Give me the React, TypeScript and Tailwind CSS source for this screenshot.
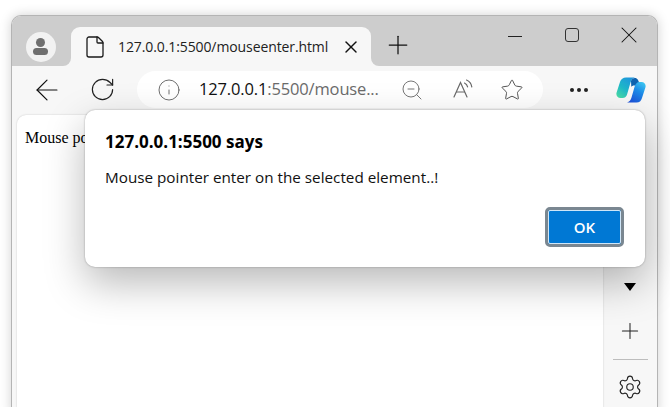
import { ArrowLeft, RotateCw, Info, ZoomOut, Star, Settings, Plus, X, File } from 'lucide-react';

function ReadAloudIcon() {
  return (
    <svg width="22" height="22" viewBox="0 0 22 22" fill="none" stroke="#6a6a6a" strokeWidth="1.2" strokeLinecap="round">
      <path d="M2 18 L8.5 3.5 L15 18" />
      <path d="M4.5 13 H12.5" />
      <path d="M12.5 4 C14.2 4.8 15.2 6 15.6 7.8" />
      <path d="M14.5 1 C17.5 2.2 19.3 4.6 19.8 7.8" />
    </svg>
  );
}

function CopilotLogo() {
  return (
    <svg width="30" height="26" viewBox="0 0 30 26">
      <defs>
        <linearGradient id="copA" x1="0" y1="1" x2="0.7" y2="0">
          <stop offset="0" stopColor="#4fe0a0" />
          <stop offset="0.5" stopColor="#1fb8c8" />
          <stop offset="1" stopColor="#1e96dc" />
        </linearGradient>
        <linearGradient id="copB" x1="0.2" y1="1" x2="0.8" y2="0">
          <stop offset="0" stopColor="#1c4fd8" />
          <stop offset="0.6" stopColor="#1d8de8" />
          <stop offset="1" stopColor="#3cc4f0" />
        </linearGradient>
      </defs>
      <path d="M10 0.5 H19 C16.5 1 15.2 3 14.5 5.5 L11.2 17 C10.5 19.5 9 21 6.5 21 H4.5 C1.5 21 -0.3 18.5 0.6 15.5 L4 5 C5 2 7 0.5 10 0.5 Z" fill="url(#copA)" />
      <path d="M15 4 C16 1 20 -0.5 22 3 L24.5 8.5 H18 C16.8 8.5 15.8 9 15.3 10 Z" fill="#0e62ae" />
      <path d="M20.5 25.5 H11 C13.5 25 14.8 23 15.5 20.5 L18.5 10 C19.2 7 21 5 23.5 5 H25.5 C28.5 5 30.3 7.5 29.4 10.5 L26 21 C25 24 23.5 25.5 20.5 25.5 Z" fill="url(#copB)" />
    </svg>
  );
}

export default function App() {
  return (
    <div className="relative w-[670px] h-[407px] overflow-hidden bg-white pt-[15px] pl-[11px] pr-[12px] font-['Open_Sans',sans-serif]">
      <div className="flex flex-col h-[400px] rounded-t-[10px] border border-[#b4b4b4] border-b-0 bg-[#f7f7f7] overflow-hidden shadow-[0_0_12px_rgba(0,0,0,0.18)]">
        {/* title bar */}
        <div className="flex items-end h-[50px] shrink-0 bg-[#cdcdcd]">
          <div className="flex items-center justify-center w-[59px] h-[39px] pr-[2px]">
            <div className="flex flex-col items-center justify-center w-[30px] h-[30px] rounded-full bg-[#f2f2f2] gap-[1px]">
              <div className="w-[9px] h-[9px] rounded-full bg-[#6f6f6f]" />
              <div className="w-[15px] h-[7px] rounded-[4px] bg-[#6f6f6f]" />
            </div>
          </div>
          <div className="relative flex items-center w-[300px] h-[39px] rounded-t-[9px] bg-[#f7f7f7] pl-[12px] pr-[10px]">
            <File size={24} strokeWidth={1.3} className="text-[#1a1a1a] shrink-0" />
            <span className="ml-[11px] text-[14px] text-[#222] whitespace-nowrap tracking-[-0.1px]">127.0.0.1:5500/mouseenter.html</span>
            <X size={20} strokeWidth={1.7} className="ml-auto text-[#111] shrink-0" />
            <span className="absolute left-[-8px] bottom-0 w-[8px] h-[8px] bg-[#f7f7f7]">
              <span className="block w-[8px] h-[8px] rounded-br-[8px] bg-[#cdcdcd]" />
            </span>
            <span className="absolute right-[-8px] bottom-0 w-[8px] h-[8px] bg-[#f7f7f7]">
              <span className="block w-[8px] h-[8px] rounded-bl-[8px] bg-[#cdcdcd]" />
            </span>
          </div>
          <div className="flex items-center justify-center w-[54px] h-[41px] self-end pb-[2px]">
            <Plus size={30} strokeWidth={1} className="text-[#111]" />
          </div>
          <div className="flex items-center self-start h-[38px] ml-auto mr-[14px] gap-[37px]">
            <div className="w-[14px] h-px bg-[#222] mt-[2px]" />
            <div className="w-[14px] h-[14px] rounded-[3px] border border-[#333] ml-[6px]" />
            <X size={28} strokeWidth={0.9} className="text-[#111] -ml-[1px]" />
          </div>
        </div>

        {/* toolbar */}
        <div className="flex items-center h-[47px] shrink-0 pl-[18px]">
          <ArrowLeft size={34} strokeWidth={0.85} className="text-[#111]" />
          <RotateCw size={27} strokeWidth={1.05} className="ml-[25px] text-[#222]" />
          <div className="flex items-center ml-[21px] w-[406px] h-[37px] rounded-full bg-white pl-[20px] pr-[19px]">
            <Info size={24} strokeWidth={0.85} className="text-[#555] shrink-0" />
            <span className="ml-[18px] text-[16.5px] whitespace-nowrap tracking-[-0.15px] text-[#6b6b6b]">
              <span className="text-[#111]">127.0.0.1</span>:5500/mouse...
            </span>
            <ZoomOut size={24} strokeWidth={0.95} className="ml-auto text-[#6f6f6f] shrink-0" />
            <span className="ml-[28px] shrink-0"><ReadAloudIcon /></span>
            <Star size={24} strokeWidth={1} className="ml-[26px] text-[#555] shrink-0" />
          </div>
          <div className="flex items-center gap-[3px] ml-[27px]">
            <div className="w-[4px] h-[4px] rounded-full bg-[#222]" />
            <div className="w-[4px] h-[4px] rounded-full bg-[#222]" />
            <div className="w-[4px] h-[4px] rounded-full bg-[#222]" />
          </div>
          <span className="ml-[28px] mt-[1px]"><CopilotLogo /></span>
        </div>

        {/* page + sidebar */}
        <div className="flex flex-1 pl-[5px] pt-[2px]">
          <div className="w-[586px] h-full shrink-0 rounded-[9px] bg-white pl-[8px] pt-[14px] shadow-[0_0_2px_rgba(0,0,0,0.2)]">
            <p className="font-['Liberation_Serif',serif] text-[16px] leading-[18px] text-black">Mouse pointer</p>
          </div>
          <div className="flex flex-col items-center flex-1 pt-[168px]">
            <div className="w-0 h-0 border-x-[6px] border-t-[8px] border-x-transparent border-t-black" />
            <Plus size={26} strokeWidth={0.95} className="mt-[27px] text-[#222]" />
            <div className="w-[35px] h-px mt-[15px] bg-[#bdbdbd]" />
            <Settings size={26} strokeWidth={1.05} className="mt-[14px] text-[#222]" />
          </div>
        </div>
      </div>

      {/* alert dialog */}
      <div className="absolute left-[85px] top-[110px] flex flex-col w-[560px] h-[157px] rounded-[10px] bg-white pl-[20px] pr-[21px] pt-[20px] pb-[20px] shadow-[0_0_2px_rgba(0,0,0,0.35),0_16px_40px_rgba(0,0,0,0.28)]">
        <h1 className="text-[17px] leading-[24px] font-bold text-black">127.0.0.1:5500 says</h1>
        <p className="mt-[13px] text-[15.25px] leading-[21px] text-[#111]">Mouse pointer enter on the selected element..!</p>
        <div className="flex justify-end mt-auto">
          <button className="w-[79px] h-[40px] rounded-[5px] border-[3px] border-[#7a8791] bg-[#0078d4] text-[15px] font-semibold text-white outline outline-1 -outline-offset-4 outline-[#cfe6f8]">
            OK
          </button>
        </div>
      </div>
    </div>
  );
}
